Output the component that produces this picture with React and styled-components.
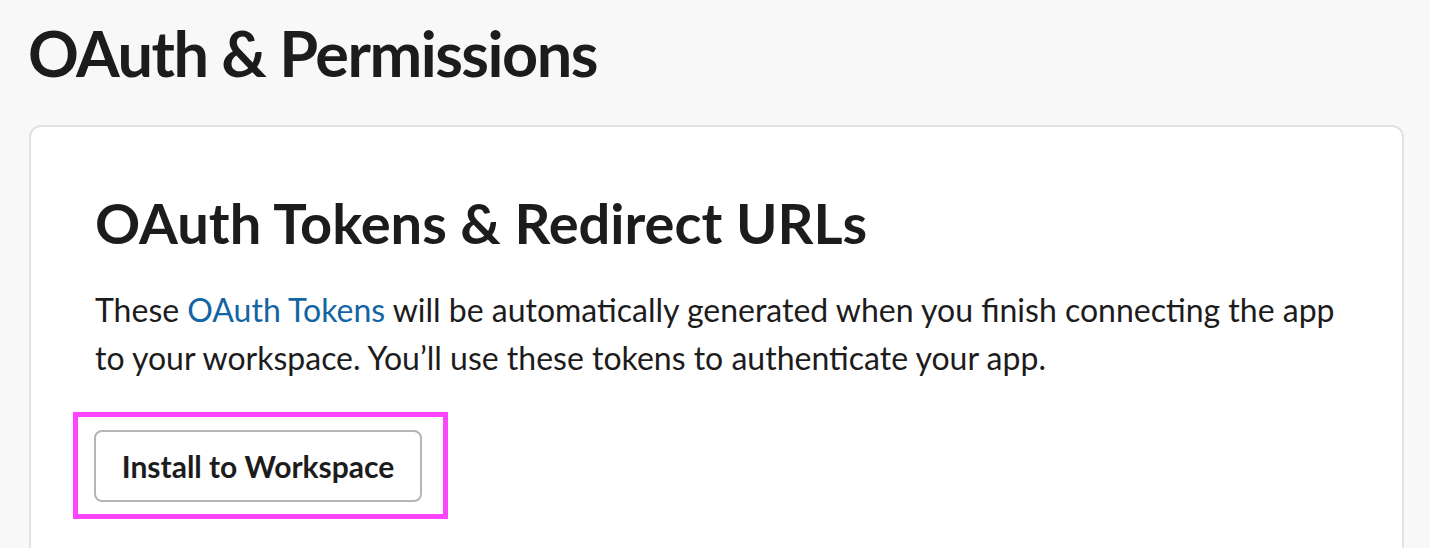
import React from "react";
import styled, { createGlobalStyle } from "styled-components";

const Global = createGlobalStyle`
  html, body { margin: 0; padding: 0; background: #f8f8f8; }
  body { font-family: Lato, "Noto Sans", sans-serif; color: #1d1c1d; }
`;

const Page = styled.div`
  padding: 11px 26px 0 29px;
  height: 548px;
  box-sizing: border-box;
  overflow: hidden;
`;

const Title = styled.h1`
  margin: 0 0 0 -1px;
  font-size: 63px;
  line-height: 84px;
  font-weight: 700;
  letter-spacing: -1.5px;
`;

const Card = styled.section`
  margin-top: 30px;
  background: #fff;
  border: 2px solid #e2e2e2;
  border-radius: 12px;
  padding: 64px 64px 64px 64px;
  min-height: 600px;
`;

const Heading = styled.h2`
  margin: 0;
  font-size: 56px;
  line-height: 64px;
  font-weight: 700;
`;

const Text = styled.p`
  margin: 31px 0 0;
  font-size: 32px;
  line-height: 48px;
  font-weight: 400;
`;

const Link = styled.a`
  color: #1264a3;
  text-decoration: none;
`;

const Highlight = styled.div`
  display: inline-block;
  margin: 30px 0 0 -22px;
  padding: 13px 21px 12px 16px;
  border: 5px solid #ff44ff;
`;

const Button = styled.button`
  display: block;
  width: 328px;
  height: 72px;
  background: #fff;
  border: 2px solid #b5b5b5;
  border-radius: 8px;
  font-family: Lato, "Noto Sans", sans-serif;
  font-size: 30px;
  font-weight: 700;
  color: #1d1c1d;
  padding: 0;
`;

export default function App() {
  return (
    <>
      <Global />
      <Page>
        <Title>OAuth &amp; Permissions</Title>
        <Card>
          <Heading>OAuth Tokens &amp; Redirect URLs</Heading>
          <Text>
            These <Link href="#">OAuth Tokens</Link> will be automatically generated when you finish connecting the app to your workspace. You’ll use these tokens to authenticate your app.
          </Text>
          <Highlight>
            <Button>Install to Workspace</Button>
          </Highlight>
        </Card>
      </Page>
    </>
  );
}
